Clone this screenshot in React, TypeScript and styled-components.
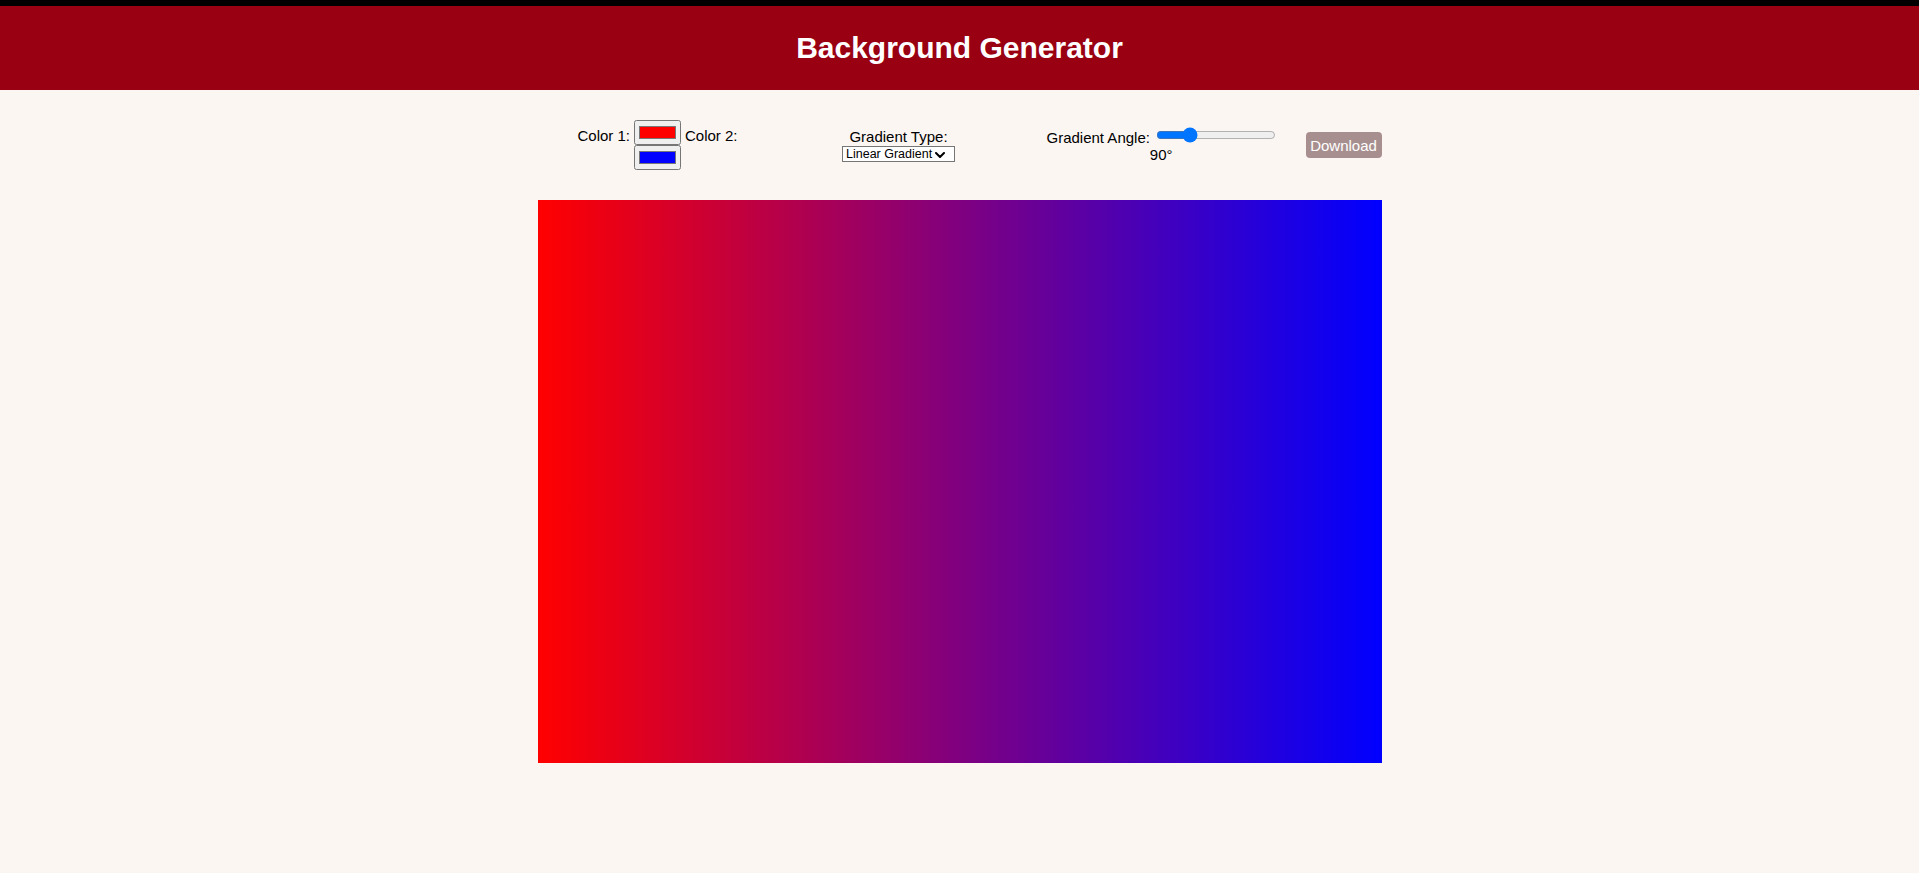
import { useState } from "react";
import styled, { createGlobalStyle } from "styled-components";

const GlobalStyle = createGlobalStyle`
  html,
  body {
    margin: 0;
    padding: 0;
    background: #fcf6f3;
    font-family: "Liberation Sans", Arial, sans-serif;
    color: #000;
  }
`;

const TopStrip = styled.div`
  height: 6px;
  background: #000;
`;

const StyledHeader = styled.header`
  display: flex;
  align-items: center;
  justify-content: center;
  height: 84px;
  background: #990012;
`;

const Title = styled.h1`
  margin: 0;
  font-size: 30px;
  font-weight: bold;
  color: #fff;
`;

const Controls = styled.div`
  display: flex;
  align-items: center;
  width: 844px;
  height: 50px;
  margin: 30px auto 0;
  padding-left: 20px;
  box-sizing: border-box;
  font-size: 15px;
`;

const ColorGroup = styled.div`
  display: flex;
  flex-wrap: wrap;
  justify-content: center;
  align-items: flex-start;
  column-gap: 4px;
  width: 200px;
`;

const Label = styled.label<{ $offset?: number }>`
  display: block;
  margin-top: ${({ $offset }) => $offset ?? 0}px;
  white-space: nowrap;
`;

const ColorInput = styled.input`
  width: 47px;
  height: 25px;
  margin: 0;
  padding: 1px 2px;
  box-sizing: border-box;
`;

const TypeGroup = styled.div`
  display: flex;
  flex-direction: column;
  align-items: center;
  width: 120px;
  margin-left: 81px;
`;

const SelectWrap = styled.div`
  position: relative;
  margin-top: 1px;

  svg {
    position: absolute;
    top: 6px;
    right: 10px;
    width: 10px;
    height: 6px;
    pointer-events: none;
  }
`;

const Select = styled.select`
  display: block;
  width: 113px;
  height: 16px;
  margin: 0;
  padding: 0 0 0 3px;
  appearance: none;
  font-family: "Liberation Sans", Arial, sans-serif;
  font-size: 12.5px;
  line-height: 14px;
  border: 1px solid #767676;
  border-radius: 0;
  background: #fff;
  color: #000;
`;

const AngleGroup = styled.div`
  display: flex;
  flex-direction: column;
  align-items: center;
  margin-left: 88px;
`;

const AngleRow = styled.div`
  display: flex;
  align-items: flex-start;
  gap: 6px;
`;

const Range = styled.input`
  width: 120px;
  height: 16px;
  margin: 0;
`;

const AngleValue = styled.span`
  display: block;
`;

const DownloadButton = styled.button`
  margin-left: auto;
  width: 76px;
  height: 26px;
  padding: 0;
  border: none;
  border-radius: 4px;
  background: #a88f8f;
  color: #fff;
  font-family: "Liberation Sans", Arial, sans-serif;
  font-size: 15px;
`;

const Preview = styled.div`
  width: 844px;
  height: 563px;
  margin: 30px auto 0;
`;

function Chevron() {
  return (
    <svg viewBox="0 0 10 6" fill="none">
      <path d="M1 1l4 4 4-4" stroke="#000" strokeWidth="2" strokeLinecap="round" strokeLinejoin="round" />
    </svg>
  );
}

export default function App() {
  const [color1, setColor1] = useState("#ff0000");
  const [color2, setColor2] = useState("#0000ff");
  const [type, setType] = useState("linear");
  const [angle, setAngle] = useState(90);

  const background =
    type === "linear"
      ? `linear-gradient(${angle}deg, ${color1}, ${color2})`
      : `radial-gradient(circle, ${color1}, ${color2})`;

  return (
    <>
      <GlobalStyle />
      <TopStrip />
      <StyledHeader>
        <Title>Background Generator</Title>
      </StyledHeader>
      <Controls>
        <ColorGroup>
          <Label $offset={7}>Color 1:</Label>
          <ColorInput type="color" value={color1} onChange={(e) => setColor1(e.target.value)} />
          <Label $offset={7}>Color 2:</Label>
          <ColorInput type="color" value={color2} onChange={(e) => setColor2(e.target.value)} />
        </ColorGroup>
        <TypeGroup>
          <Label>Gradient Type:</Label>
          <SelectWrap>
            <Select value={type} onChange={(e) => setType(e.target.value)}>
              <option value="linear">Linear Gradient</option>
              <option value="radial">Radial Gradient</option>
            </Select>
            <Chevron />
          </SelectWrap>
        </TypeGroup>
        <AngleGroup>
          <AngleRow>
            <Label $offset={2}>Gradient Angle:</Label>
            <Range
              type="range"
              min={0}
              max={360}
              value={angle}
              onChange={(e) => setAngle(Number(e.target.value))}
            />
          </AngleRow>
          <AngleValue>{angle}°</AngleValue>
        </AngleGroup>
        <DownloadButton>Download</DownloadButton>
      </Controls>
      <Preview style={{ background }} />
    </>
  );
}
